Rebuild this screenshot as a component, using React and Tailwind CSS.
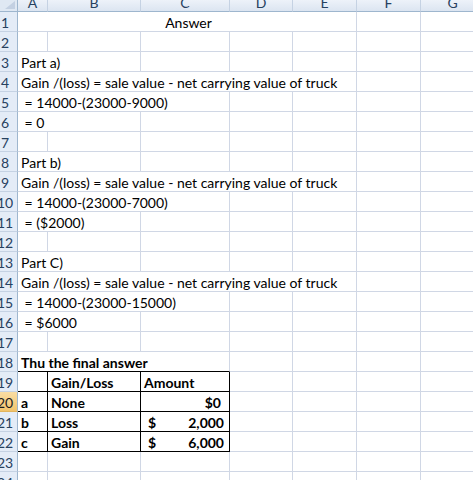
import React from 'react';

const COLS = ['A', 'B', 'C', 'D', 'E', 'F', 'G'];
// widths include the 1px right gridline
const WIDTHS = [30, 93, 89, 63, 64, 64, 64];

const calc = (n) => ' = ' + n;

const DATA = {
  1: [{ span: 5, text: 'Answer', align: 'center' }],
  3: [{ span: 2, text: 'Part a)' }],
  4: [{ span: 5, text: 'Gain /(loss) = sale value - net carrying value of truck' }],
  5: [{ span: 3, text: calc('14000-(23000-9000)') }],
  6: [{ span: 2, text: calc('0') }],
  8: [{ span: 2, text: 'Part b)' }],
  9: [{ span: 5, text: 'Gain /(loss) = sale value - net carrying value of truck' }],
  10: [{ span: 3, text: calc('14000-(23000-7000)') }],
  11: [{ span: 2, text: calc('($2000)') }],
  13: [{ span: 2, text: 'Part C)' }],
  14: [{ span: 5, text: 'Gain /(loss) = sale value - net carrying value of truck' }],
  15: [{ span: 3, text: calc('14000-(23000-15000)') }],
  16: [{ span: 2, text: calc('$6000') }],
  18: [{ span: 3, text: 'Thu the final answer', bold: true, bb: true }],
  19: [
    { text: '', bold: true, bb: true, br: true },
    { text: 'Gain/Loss', bold: true, bb: true, br: true },
    { text: 'Amount', bold: true, bb: true, br: true },
  ],
  20: [
    { text: 'a', bold: true, bb: true, br: true },
    { text: 'None', bold: true, bb: true, br: true },
    { text: '$0', bold: true, bb: true, br: true, align: 'right' },
  ],
  21: [
    { text: 'b', bold: true, bb: true, br: true },
    { text: 'Loss', bold: true, bb: true, br: true },
    { money: '2,000', bold: true, bb: true, br: true },
  ],
  22: [
    { text: 'c', bold: true, bb: true, br: true },
    { text: 'Gain', bold: true, bb: true, br: true },
    { money: '6,000', bold: true, bb: true, br: true },
  ],
};

const fillRow = (cells = []) => {
  const out = [...cells];
  let used = out.reduce((s, c) => s + (c.span || 1), 0);
  while (used < COLS.length) {
    out.push({ text: '' });
    used++;
  }
  // attach pixel widths
  let col = 0;
  return out.map((c) => {
    const span = c.span || 1;
    const width = WIDTHS.slice(col, col + span).reduce((a, b) => a + b, 0);
    col += span;
    return { ...c, width };
  });
};

const Cell = ({ cell }) => {
  const align =
    cell.align === 'center' ? 'justify-center' : cell.align === 'right' ? 'justify-end pr-[8px]' : 'justify-start';
  return (
    <div
      className={`h-[20px] shrink-0 flex items-center pl-[3px] pt-[1px] border-b border-r whitespace-pre ${align} ${
        cell.bold ? 'font-bold' : ''
      } ${cell.bb ? 'border-b-black' : 'border-b-[#d0d7e5]'} ${cell.br ? 'border-r-black' : 'border-r-[#d0d7e5]'}`}
      style={{ width: cell.width }}
    >
      {cell.money ? (
        <div className="flex w-full justify-between pl-[4px] pr-[5px]">
          <span>$</span>
          <span>{cell.money}</span>
        </div>
      ) : (
        cell.text
      )}
    </div>
  );
};

const RowHeader = ({ n, selected }) => (
  <div
    className={`w-[18px] h-[20px] shrink-0 overflow-hidden border-r border-b border-r-[#9eb6ce] flex items-center pt-[1px] ${
      selected
        ? 'bg-gradient-to-b from-[#f9dda4] to-[#f2c46b] border-b-[#e2b55e] text-[#1c1c1c]'
        : 'bg-[#e4ecf7] border-b-[#c5d2e3] text-[#27415f]'
    }`}
  >
    <div className="w-[10px] flex justify-center">{n}</div>
  </div>
);

export default function App() {
  const rowNums = Array.from({ length: 24 }, (_, i) => i + 1);
  return (
    <div
      className="w-[473px] h-[480px] overflow-hidden bg-white text-[14px] text-black leading-[19px]"
      style={{ fontFamily: 'Lato, "Open Sans", sans-serif' }}
    >
      {/* column headers */}
      <div className="flex h-[12px] overflow-hidden">
        <div className="w-[18px] h-[12px] shrink-0 bg-[#dfe8f3] border-r border-b border-[#9eb6ce] relative">
          <svg width="17" height="11" className="absolute left-0 top-0">
            <polygon points="15,1 15,9 5,9" fill="#c3d0e2" />
          </svg>
        </div>
        {COLS.map((c, i) => (
          <div
            key={c}
            className="h-[12px] shrink-0 overflow-hidden border-r border-b border-r-[#c5d2e3] border-b-[#9eb6ce] bg-gradient-to-b from-[#edf2f9] to-[#dce5f1] text-[#27415f]"
            style={{ width: WIDTHS[i] }}
          >
            <div className="h-[22px] -mt-[9px] flex items-center justify-center">{c}</div>
          </div>
        ))}
      </div>

      {/* rows */}
      {rowNums.map((n) => (
        <div key={n} className="flex">
          <RowHeader n={n} selected={n === 20} />
          {fillRow(DATA[n]).map((cell, i) => (
            <Cell key={i} cell={cell} />
          ))}
        </div>
      ))}
    </div>
  );
}
